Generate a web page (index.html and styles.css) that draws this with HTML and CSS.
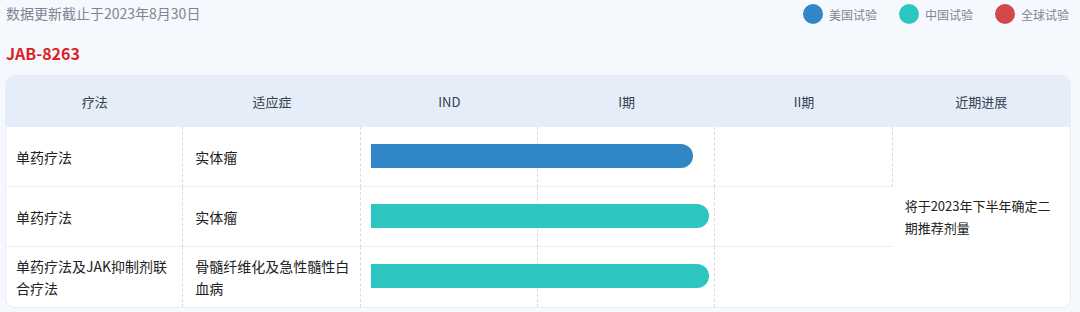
FILE: index.html
```html
<!DOCTYPE html>
<html lang="zh">
<head>
<meta charset="utf-8">
<link rel="stylesheet" href="styles.css">
</head>
<body>
<div class="page">
  <div class="topbar">
    <div class="updated">数据更新截止于2023年8月30日</div>
    <div class="legend">
      <span class="legend-item"><span class="dot dot-us"></span>美国试验</span>
      <span class="legend-item"><span class="dot dot-cn"></span>中国试验</span>
      <span class="legend-item"><span class="dot dot-gl"></span>全球试验</span>
    </div>
  </div>
  <h1 class="title">JAB-8263</h1>
  <div class="table">
    <div class="th">疗法</div>
    <div class="th">适应症</div>
    <div class="th">IND</div>
    <div class="th">I期</div>
    <div class="th">II期</div>
    <div class="th">近期进展</div>

    <div class="td r1 c1">单药疗法</div>
    <div class="td r1 c2">实体瘤</div>
    <div class="td r1 c3"></div>
    <div class="td r1 c4"></div>
    <div class="td r1 c5"></div>
    <div class="bar bar-us r1" style="width:322px"></div>

    <div class="td r2 c1">单药疗法</div>
    <div class="td r2 c2">实体瘤</div>
    <div class="td r2 c3"></div>
    <div class="td r2 c4"></div>
    <div class="td r2 c5 noright"></div>
    <div class="bar bar-cn r2" style="width:338px"></div>

    <div class="td r3 c1 last">单药疗法及JAK抑制剂联合疗法</div>
    <div class="td r3 c2 last">骨髓纤维化及急性髓性白血病</div>
    <div class="td r3 c3 last"></div>
    <div class="td r3 c4 last"></div>
    <div class="td r3 c5 last noright"></div>
    <div class="bar bar-cn r3" style="width:338px"></div>

    <div class="td progress">将于2023年下半年确定二期推荐剂量</div>
  </div>
</div>
</body>
</html>
```

FILE: styles.css
```css
* { box-sizing: border-box; }
html, body {
  margin: 0;
  padding: 0;
  background: #f5f8fd;
}
body {
  font-family: "Noto Sans CJK SC", "Noto Sans", sans-serif;
  color: #222;
  width: 1080px;
  height: 312px;
  overflow: hidden;
}
.page {
  padding: 1px 10px 0 6px;
}
.topbar {
  display: flex;
  justify-content: space-between;
  align-items: center;
  height: 26px;
}
.updated {
  font-size: 14px;
  color: #7c8692;
  align-self: flex-start;
  line-height: 24px;
}
.legend {
  display: flex;
  gap: 22px;
  font-size: 12px;
  color: #7c8692;
  padding-right: 1px;
}
.legend-item {
  display: flex;
  align-items: center;
  gap: 6px;
}
.dot {
  width: 20px;
  height: 20px;
  border-radius: 50%;
  display: inline-block;
}
.dot-us { background: #3187c5; }
.dot-cn { background: #2cc5c0; }
.dot-gl { background: #d2484b; }
.title {
  margin: 15px 0 0 0;
  font-size: 16px;
  line-height: 22px;
  font-weight: 700;
  color: #dc1f28;
}
.table {
  margin-top: 12px;
  display: grid;
  grid-template-columns: repeat(6, 1fr);
  grid-template-rows: 51px 60px 60px 60px;
  background: #fff;
  border-radius: 8px;
  box-shadow: 0 0 0 1px #e7edf5;
  overflow: hidden;
  width: 1064px;
}
.th {
  background: #e5eef8;
  display: flex;
  align-items: center;
  justify-content: center;
  font-size: 13px;
  color: #34404c;
}
.td {
  display: flex;
  align-items: center;
  padding: 0 11px 0 10px;
  font-size: 14px;
  line-height: 22px;
  color: #222;
  border-right: 1px dashed #cfdceb;
  border-bottom: 1px solid #ecf0f5;
}
.td.c2 { padding: 0 8px 0 12px; }
.td.last { border-bottom: none; }
.td.noright { border-right: none; }
.r1 { grid-row: 2; }
.r2 { grid-row: 3; }
.r3 { grid-row: 4; }
.c1 { grid-column: 1; }
.c2 { grid-column: 2; }
.c3 { grid-column: 3; }
.c4 { grid-column: 4; }
.c5 { grid-column: 5; }
.progress {
  grid-column: 6;
  grid-row: 2 / 5;
  border: none;
  font-size: 13px;
  padding: 0 12px 0 12px;
}
.bar {
  grid-column: 3 / 5;
  align-self: center;
  margin-left: 10px;
  height: 24px;
  border-radius: 0 12px 12px 0;
  position: relative;
  z-index: 1;
  margin-top: -2px;
}
.bar-us { background: #3187c5; }
.bar-cn { background: #2cc5c0; }
```
